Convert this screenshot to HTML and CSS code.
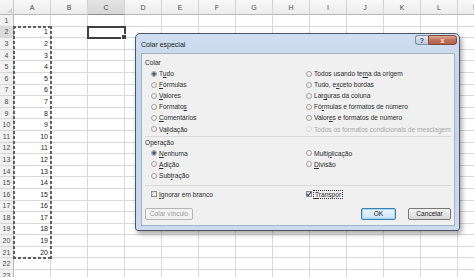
FILE: index.html
```html
<!DOCTYPE html>
<html lang="pt-BR">

<head>
  <meta charset="UTF-8">
  <meta name="viewport" content="width=device-width, initial-scale=1.0">
  <title>Colar especial</title>
  <link rel="stylesheet" href="styles.css">
</head>

<body>
  <div class="sheet" id="sheet"></div>

  <div class="dialog">
    <div class="dialog_title">
      <span class="title_text">Colar especial</span>
      <div class="help_btn">?</div>
      <div class="close_btn">x</div>
    </div>

    <div class="dialog_body">
      <div class="group_title">Colar</div>
      <div class="options paste">
        <div class="opt"><span class="radio on"></span><span>T<u>u</u>do</span></div>
        <div class="opt"><span class="radio"></span><span><u>F</u>órmulas</span></div>
        <div class="opt"><span class="radio"></span><span><u>V</u>alores</span></div>
        <div class="opt"><span class="radio"></span><span>Formato<u>s</u></span></div>
        <div class="opt"><span class="radio"></span><span><u>C</u>omentários</span></div>
        <div class="opt"><span class="radio"></span><span>Va<u>l</u>idação</span></div>
        <div class="opt"><span class="radio"></span><span>Todos usando te<u>m</u>a da origem</span></div>
        <div class="opt"><span class="radio"></span><span>Tudo, e<u>x</u>ceto bordas</span></div>
        <div class="opt"><span class="radio"></span><span>Lar<u>g</u>uras da coluna</span></div>
        <div class="opt"><span class="radio"></span><span>Fó<u>r</u>mulas e formatos de número</span></div>
        <div class="opt"><span class="radio"></span><span>Valor<u>e</u>s e formatos de número</span></div>
        <div class="opt disabled"><span class="radio"></span><span>Todos os formatos condicionais de mesclagem</span></div>
      </div>

      <div class="sep first"></div>

      <div class="group_title op_title">Operação</div>
      <div class="options operation">
        <div class="opt"><span class="radio on"></span><span><u>N</u>enhuma</span></div>
        <div class="opt"><span class="radio"></span><span><u>A</u>dição</span></div>
        <div class="opt"><span class="radio"></span><span>Sub<u>t</u>ração</span></div>
        <div class="opt"><span class="radio"></span><span>Multi<u>p</u>licação</span></div>
        <div class="opt"><span class="radio"></span><span><u>D</u>ivisão</span></div>
      </div>

      <div class="sep second"></div>

      <div class="checks">
        <div class="opt"><span class="check"></span><span><u>I</u>gnorar em branco</span></div>
        <div class="opt">
          <span class="check">
            <svg width="6" height="6" viewBox="0 0 6 6"><polyline points="0.8,3 2.3,4.6 5.2,0.9" fill="none" stroke="#24466e" stroke-width="1.1"/></svg>
          </span>
          <span class="focus"><u>T</u>ranspor</span>
        </div>
      </div>

      <div class="buttons">
        <button type="button" class="btn disabled">Colar vínculo</button>
        <button type="button" class="btn ok">OK</button>
        <button type="button" class="btn cancel">Cancelar</button>
      </div>
    </div>
  </div>

  <script>
    const sheet = document.querySelector("#sheet");
    const cols = "ABCDEFGHIJKLM".split("");

    let html = ['<div class="corner"></div>'];

    cols.forEach((c) => {
      html.push(`<div class="col_head ${c === 'C' ? 'active' : ''}">${c}</div>`);
    });

    for (let r = 1; r <= 23; r++) {
      html.push(`<div class="row_head ${r === 2 ? 'active' : ''}">${r}</div>`);
      cols.forEach((c) => {
        let val = (c === 'A' && r >= 2 && r <= 21) ? r - 1 : '';
        html.push(`<div class="cell">${val}</div>`);
      });
    }

    // overlays placed on grid lines
    html.push('<div class="copy_range"></div>');
    html.push('<div class="selected"></div>');

    sheet.innerHTML = html.join("");
  </script>
</body>

</html>
```

FILE: styles.css
```css
* {
  box-sizing: border-box;
  margin: 0;
  padding: 0;
}

body {
  width: 474px;
  height: 277px;
  overflow: hidden;
  position: relative;

  background-color: white;
  font-family: "Liberation Sans", Arial, sans-serif;
}

/* ---------- spreadsheet ---------- */

.sheet {
  display: grid;
  grid-template-columns: 14px repeat(13, 37px);
  grid-template-rows: 15px repeat(23, 11.6px);

  position: relative;
  font-size: 7px;
}

.corner {
  background: linear-gradient(#f7f7f7, #ebebeb);
  border-right: 1px solid #c9c9c9;
  border-bottom: 1px solid #b9b9b9;
  position: relative;
}

.corner::after {
  content: "";
  position: absolute;
  right: 1px;
  bottom: 1px;
  border-left: 5px solid transparent;
  border-bottom: 5px solid #d2d2d2;
}

.col_head {
  display: flex;
  justify-content: center;
  align-items: center;

  color: #4a4a4a;
  background: linear-gradient(#f8f8f8, #ececec);
  border-right: 1px solid #d3d3d3;
  border-bottom: 1px solid #b9b9b9;
}

.row_head {
  display: flex;
  justify-content: center;
  align-items: center;

  color: #4a4a4a;
  background-color: #f1f1f1;
  border-right: 1px solid #b9b9b9;
  border-bottom: 1px solid #d6d6d6;
}

.col_head.active {
  background: linear-gradient(#e4e4e4, #d6d6d6);
  border-bottom: 1px solid #8c8c8c;
}

.row_head.active {
  background-color: #dcdcdc;
  border-right: 1px solid #8c8c8c;
}

.cell {
  display: flex;
  justify-content: flex-end;
  align-items: center;

  padding-right: 2px;
  color: #222;
  border-right: 1px solid #d6d8d9;
  border-bottom: 1px solid #d6d8d9;
}

.copy_range {
  position: absolute;
  grid-column: 2 / 3;
  grid-row: 3 / 23;
  top: -1px;
  left: -1px;
  right: -1px;
  bottom: -1px;

  background:
    repeating-linear-gradient(90deg, #5e5e5e 0 3px, transparent 3px 5px) top / 100% 2px no-repeat,
    repeating-linear-gradient(90deg, #5e5e5e 0 3px, transparent 3px 5px) bottom / 100% 2px no-repeat,
    repeating-linear-gradient(#5e5e5e 0 3px, transparent 3px 5px) left / 2px 100% no-repeat,
    repeating-linear-gradient(#5e5e5e 0 3px, transparent 3px 5px) right / 2px 100% no-repeat;
}

.selected {
  position: absolute;
  grid-column: 4 / 5;
  grid-row: 3 / 4;
  top: -1px;
  left: -1px;
  right: -1px;
  bottom: -1px;

  border: 2px solid #3f3f3f;
}

.selected::after {
  content: "";
  position: absolute;
  right: -3px;
  bottom: -3px;
  width: 4px;
  height: 4px;
  background-color: #3f3f3f;
  border: 1px solid white;
}

/* ---------- dialog window ---------- */

.dialog {
  width: 325px;
  height: 198px;

  position: absolute;
  left: 135px;
  top: 33px;

  display: flex;
  flex-direction: column;
  padding: 0 4px 4px 5px;

  background: linear-gradient(#cfdef0, #c3d5ea 30%, #ccdbed);
  border: 1px solid #4b5764;
  border-radius: 5px 5px 3px 3px;
  box-shadow: 2px 3px 5px rgba(0, 0, 0, 0.35);

  font-size: 6.6px;
  color: #2a2a2a;
}

.dialog_title {
  height: 19px;
  display: flex;
  align-items: flex-start;
}

.title_text {
  margin-top: 7px;
  font-size: 7px;
  color: #1c1c1c;
  flex: 1;
}

.help_btn {
  width: 13px;
  height: 10px;
  margin-top: 1px;

  display: flex;
  justify-content: center;
  align-items: center;

  font-size: 7px;
  font-weight: bold;
  color: #43556a;
  background: linear-gradient(#e1e9f2, #b9c8da);
  border: 1px solid #7d8fa4;
  border-right: none;
  border-radius: 3px 0 0 3px;
}

.close_btn {
  width: 29px;
  height: 10px;
  margin-top: 1px;
  margin-right: -2px;

  display: flex;
  justify-content: center;
  align-items: center;

  font-size: 7px;
  font-weight: bold;
  color: #fbe9e2;
  background: linear-gradient(#e0aa94, #c07358 50%, #b3624a);
  border: 1px solid #7e4b3c;
  border-radius: 0 3px 3px 0;
}

.dialog_body {
  flex: 1;

  display: flex;
  flex-direction: column;
  padding: 2px 3px 0 3px;

  background-color: #f0f0f0;
  border: 1px solid #a3b4c9;
}

.group_title {
  height: 12px;
  display: flex;
  align-items: center;
}

.group_title.op_title {
  height: 11px;
}

.options {
  display: grid;
  grid-auto-flow: column;
  grid-template-columns: 155px 1fr;
  padding-left: 6px;
}

.paste {
  grid-template-rows: repeat(6, 11.1px);
}

.operation {
  grid-template-rows: repeat(3, 11.2px);
}

.sep {
  height: 1px;
  background-color: #dadada;
}

.sep.first {
  margin-top: 1px;
}

.sep.second {
  margin-top: 3.5px;
}

.opt {
  display: flex;
  align-items: center;
  gap: 2px;
  white-space: nowrap;
}

.opt.disabled {
  color: #a9a9a9;
}

.opt u {
  text-decoration-thickness: 0.6px;
  text-underline-offset: 1px;
}

.radio {
  width: 6px;
  height: 6px;
  flex-shrink: 0;

  border: 1px solid #a2a2a2;
  border-radius: 50%;
  background: radial-gradient(circle at 50% 40%, #ffffff, #dcdcdc);
}

.radio.on {
  background: radial-gradient(circle, #3d5675 0 1.3px, #8ea2b8 1.8px, #e6e6e6 2.4px);
}

.opt.disabled .radio {
  border-color: #d3d3d3;
  background: #f4f4f4;
}

.checks {
  height: 11px;
  margin-top: 3px;

  display: grid;
  grid-template-columns: 155px 1fr;
  padding-left: 6px;
}

.check {
  width: 6px;
  height: 6px;
  flex-shrink: 0;

  display: flex;
  justify-content: center;
  align-items: center;

  border: 1px solid #8f8f8f;
  background: linear-gradient(135deg, #dcdcdc, #f9f9f9);
}

.check svg {
  flex-shrink: 0;
}

.focus {
  padding: 0 1px;
  outline: 1px dotted #333;
  outline-offset: 0;
}

.buttons {
  display: flex;
  margin-top: 8px;
}

.btn {
  height: 12px;

  font-family: inherit;
  font-size: 6.6px;
  color: #222;

  background: linear-gradient(#f4f4f4, #e6e6e6 50%, #d9d9d9);
  border: 1px solid #777;
  border-radius: 2px;
}

.btn.disabled {
  width: 48px;
  color: #9c9c9c;
  background: #f3f3f3;
  border-color: #b4b4b4;
}

.btn.ok {
  width: 35px;
  margin-left: auto;
  background: linear-gradient(#eef7fd, #dcecf8 50%, #c6e1f3);
  border-color: #3c7fb1;
  box-shadow: inset 0 0 0 1px #9fd5f5;
}

.btn.cancel {
  width: 43px;
  margin-left: 12px;
}
```
